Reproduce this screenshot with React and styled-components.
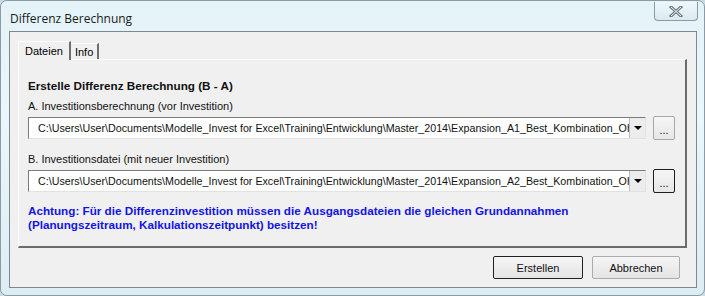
import React from 'react';
import styled, { createGlobalStyle } from 'styled-components';

const GlobalStyle = createGlobalStyle`
  html, body {
    margin: 0;
    padding: 0;
    background: #c9dce6;
  }
`;

const Frame = styled.div`
  width: 705px;
  height: 296px;
  box-sizing: border-box;
  display: flex;
  flex-direction: column;
  padding: 0 7px 7px 8px;
  border-radius: 7px;
  background: linear-gradient(180deg, #e4f3f8 0%, #eaf7fb 40%, #dcedf3 100%);
  border: 1px solid #8d9aa3;
  font-family: "Liberation Sans", Arial, sans-serif;
`;

const TitleBar = styled.div`
  height: 30px;
  display: flex;
  align-items: flex-start;
  justify-content: space-between;
`;

const Title = styled.span`
  margin-top: 9px;
  margin-left: 1px;
  font-family: "Open Sans", "Liberation Sans", sans-serif;
  font-size: 12px;
  color: #1b1b1b;
`;

const CloseButton = styled.div`
  width: 44px;
  height: 19px;
  margin-top: 1px;
  margin-right: -1px;
  box-sizing: border-box;
  border: 1px solid #8a9aa4;
  border-top: none;
  border-radius: 0 0 4px 4px;
  background: linear-gradient(180deg, #eef8fb 0%, #dbeaf0 100%);
  display: flex;
  align-items: center;
  justify-content: center;
`;

const Client = styled.div`
  flex: 1;
  background: #f0f0f0;
  border: 1px solid #7e8891;
  display: flex;
  flex-direction: column;
  padding: 9px 9px 0 8px;
`;

const TabStrip = styled.div`
  display: flex;
  align-items: flex-end;
  height: 18px;
  position: relative;
  z-index: 1;
`;

const Tab = styled.div`
  box-sizing: border-box;
  height: ${p => (p.$active ? '19px' : '16px')};
  margin-bottom: ${p => (p.$active ? '-1px' : '0')};
  padding: 0 ${p => (p.$active ? '6px' : '4px')};
  display: flex;
  align-items: center;
  font-size: 11px;
  color: #000;
  background: #f0f0f0;
  border-top: 1px solid #ffffff;
  border-left: ${p => (p.$active ? '1px solid #ffffff' : 'none')};
  border-right: 2px solid #6f6f6f;
`;

const Panel = styled.div`
  height: 189px;
  box-sizing: border-box;
  border-top: 1px solid #ffffff;
  border-left: 1px solid #ffffff;
  border-right: 2px solid #6b6b6b;
  border-bottom: 2px solid #6b6b6b;
  padding: 19px 0 0 9px;
  display: flex;
  flex-direction: column;
`;

const Heading = styled.div`
  font-size: 11.7px;
  font-weight: bold;
  color: #111;
  margin-bottom: 8px;
`;

const Label = styled.div`
  font-size: 11px;
  color: #111;
  margin-bottom: 4px;
`;

const FieldRow = styled.div`
  display: flex;
  align-items: center;
  gap: 7px;
  margin-bottom: ${p => p.$gap || 0}px;
`;

const Combo = styled.div`
  width: 618px;
  height: 22px;
  box-sizing: border-box;
  border: 1px solid;
  border-color: #7a7a7a #e2e2e2 #e2e2e2 #7a7a7a;
  background: #fff;
  display: flex;
  align-items: stretch;
`;

const ComboText = styled.div`
  flex: 1;
  overflow: hidden;
  white-space: nowrap;
  padding-left: 9px;
  font-size: 10.7px;
  line-height: 20px;
  color: #111;
`;

const DropButton = styled.div`
  width: 16px;
  box-sizing: border-box;
  background: #ececec;
  border-left: 1px solid #bdbdbd;
  display: flex;
  align-items: center;
  justify-content: center;
`;

const Arrow = styled.div`
  width: 0;
  height: 0;
  border-left: 4px solid transparent;
  border-right: 4px solid transparent;
  border-top: 4px solid #000;
`;

const BrowseButton = styled.div`
  width: 22px;
  height: 24px;
  box-sizing: border-box;
  border: 1px solid ${p => (p.$focused ? '#1c1c1c' : '#a8a8a8')};
  border-radius: 2px;
  background: linear-gradient(180deg, #f6f6f6 0%, #e6e6e6 100%);
  display: flex;
  align-items: center;
  justify-content: center;
  padding-top: 3px;
  font-size: 11px;
  line-height: 12px;
  color: #111;
`;

const Warning = styled.div`
  margin-top: 11px;
  font-size: 11.7px;
  font-weight: bold;
  line-height: 14px;
  color: #1414e6;
`;

const ButtonRow = styled.div`
  display: flex;
  justify-content: flex-end;
  gap: 9px;
  padding: 8px 7px 0 0;
`;

const Button = styled.div`
  width: ${p => (p.$default ? '90px' : '88px')};
  height: 23px;
  box-sizing: border-box;
  border: 1px solid ${p => (p.$default ? '#202020' : '#acacac')};
  border-radius: 2px;
  background: linear-gradient(180deg, #f5f5f5 0%, #e4e4e4 100%);
  display: flex;
  align-items: center;
  justify-content: center;
  font-size: 11px;
  color: #111;
`;

const pathA = 'C:\\Users\\User\\Documents\\Modelle_Invest for Excel\\Training\\Entwicklung\\Master_2014\\Expansion_A1_Best_Kombination_Ohne.xlsx';
const pathB = 'C:\\Users\\User\\Documents\\Modelle_Invest for Excel\\Training\\Entwicklung\\Master_2014\\Expansion_A2_Best_Kombination_Ohne.xlsx';

const FileField = ({ value, focused, gap }) => (
  <FieldRow $gap={gap}>
    <Combo>
      <ComboText>{value}</ComboText>
      <DropButton><Arrow /></DropButton>
    </Combo>
    <BrowseButton $focused={focused}>...</BrowseButton>
  </FieldRow>
);

export default function App() {
  return (
    <>
      <GlobalStyle />
      <Frame>
        <TitleBar>
          <Title>Differenz Berechnung</Title>
          <CloseButton>
            <svg width="14" height="11" viewBox="0 0 14 11">
              <path d="M2 1 L12 10 M12 1 L2 10" stroke="#6a7780" strokeWidth="3" strokeLinecap="square" fill="none" />
              <path d="M2 1 L12 10 M12 1 L2 10" stroke="#f4f8fa" strokeWidth="1" fill="none" />
            </svg>
          </CloseButton>
        </TitleBar>
        <Client>
          <TabStrip>
            <Tab $active>Dateien</Tab>
            <Tab>Info</Tab>
          </TabStrip>
          <Panel>
            <Heading>Erstelle Differenz Berechnung (B - A)</Heading>
            <Label>A. Investitionsberechnung (vor Investition)</Label>
            <FileField value={pathA} gap={13} />
            <Label>B. Investitionsdatei (mit neuer Investition)</Label>
            <FileField value={pathB} focused />
            <Warning>
              Achtung: Für die Differenzinvestition müssen die Ausgangsdateien die gleichen Grundannahmen
              <br />
              (Planungszeitraum, Kalkulationszeitpunkt) besitzen!
            </Warning>
          </Panel>
          <ButtonRow>
            <Button $default>Erstellen</Button>
            <Button>Abbrechen</Button>
          </ButtonRow>
        </Client>
      </Frame>
    </>
  );
}
